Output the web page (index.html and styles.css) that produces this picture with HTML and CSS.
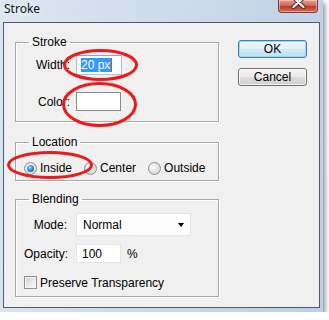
FILE: index.html
```html
<!DOCTYPE html>
<html>
<head>
<meta charset="utf-8">
<link rel="stylesheet" href="styles.css">
</head>
<body>
<div class="window">
  <div class="titlebar">
    <span class="title">Stroke</span>
    <div class="close">
      <svg width="40" height="13" viewBox="0 0 40 13">
        <path d="M15.5 -1.5 L25.5 8 M25.5 -1.5 L15.5 8" stroke="#5a2420" stroke-width="4.2" stroke-linecap="round"/>
        <path d="M15.5 -1.5 L25.5 8 M25.5 -1.5 L15.5 8" stroke="#ffffff" stroke-width="2.2" stroke-linecap="round"/>
      </svg>
    </div>
  </div>
  <div class="client">
    <div class="groups">
      <fieldset class="group g-stroke">
        <legend>Stroke</legend>
        <div class="row r-width">
          <span class="lbl">Width:</span>
          <div class="field f-width"><span class="sel">20 px</span><span class="caret"></span></div>
        </div>
        <div class="row r-color">
          <span class="lbl">Color:</span>
          <div class="swatch"></div>
        </div>
      </fieldset>
      <fieldset class="group g-location">
        <legend>Location</legend>
        <div class="radios">
          <div class="radio"><span class="dot on"></span><span>Inside</span></div>
          <div class="radio"><span class="dot"></span><span>Center</span></div>
          <div class="radio"><span class="dot"></span><span>Outside</span></div>
        </div>
      </fieldset>
      <fieldset class="group g-blending">
        <legend>Blending</legend>
        <div class="row r-mode">
          <span class="lbl">Mode:</span>
          <div class="select"><span>Normal</span><span class="arrow"></span></div>
        </div>
        <div class="row r-opacity">
          <span class="lbl">Opacity:</span>
          <div class="field f-opacity">100</div>
          <span class="pct">%</span>
        </div>
        <div class="check"><span class="box"></span><span>Preserve Transparency</span></div>
      </fieldset>
    </div>
    <div class="buttons">
      <div class="btn btn-default">OK</div>
      <div class="btn">Cancel</div>
    </div>
  </div>
  <svg class="marks" width="329" height="320" viewBox="0 0 329 320">
    <ellipse cx="100.5" cy="65" rx="36" ry="14.5" fill="none" stroke="#ec1b1b" stroke-width="3"/>
    <ellipse cx="99.5" cy="104.5" rx="36" ry="21" fill="none" stroke="#ec1b1b" stroke-width="3"/>
    <ellipse cx="50" cy="165" rx="41.5" ry="12.5" fill="none" stroke="#ec1b1b" stroke-width="3"/>
  </svg>
</div>
</body>
</html>
```

FILE: styles.css
```css
html, body {
  margin: 0;
  padding: 0;
  background: #ffffff;
}

body {
  font-family: "Liberation Sans", Arial, sans-serif;
  font-size: 12px;
  color: #000;
}

.window {
  position: relative;
  width: 323px;
  height: 312px;
  box-sizing: border-box;
  padding: 0 3px 4px 3px;
  display: flex;
  flex-direction: column;
  background: linear-gradient(100deg, #dde7f2 0%, #cfdcec 40%, #bccfe6 100%);
  box-shadow: 2px 3px 5px rgba(0, 0, 0, 0.45);
}

.titlebar {
  height: 22px;
  display: flex;
  justify-content: space-between;
  align-items: flex-start;
  flex: none;
}

.title {
  font-family: "Noto Sans", "Open Sans", sans-serif;
  font-size: 12px;
  line-height: 16px;
  padding: 1px 0 0 1px;
  color: #111;
  text-shadow: 0 0 6px rgba(255, 255, 255, 0.9);
}

.close {
  width: 40px;
  height: 13px;
  margin-right: 2px;
  border: 1px solid #7a3a36;
  border-top: none;
  border-radius: 0 0 4px 4px;
  box-sizing: border-box;
  background: linear-gradient(#e4a295 0%, #d0685c 45%, #bf3c30 55%, #d46a52 100%);
  box-shadow: inset 0 0 0 1px rgba(255, 220, 210, 0.5);
  overflow: hidden;
}

.close svg {
  display: block;
  margin: -1px 0 0 -1px;
}

.client {
  flex: 1;
  display: flex;
  align-items: flex-start;
  border: 1px solid #4e5b6a;
  background: #f0f0f0;
}

.groups {
  margin-left: 11px;
  width: 204px;
  display: flex;
  flex-direction: column;
}

.group {
  margin: 0;
  padding: 0 0 0 8px;
  border: 1px solid #a8a8a8;
  box-shadow: 1px 1px 0 #ffffff, inset 1px 1px 0 #ffffff;
  min-width: 0;
}

.group legend {
  margin-left: 5px;
  padding: 0 3px;
  line-height: 16px;
  height: 16px;
}

.g-stroke {
  margin-top: 11px;
  padding-bottom: 10px;
}

.g-location {
  margin-top: 12px;
  padding-bottom: 4px;
}

.g-blending {
  margin-top: 10px;
  padding-bottom: 7px;
}

.row {
  display: flex;
  align-items: center;
}

.lbl {
  text-align: right;
}

.g-stroke .lbl {
  width: 46px;
  margin-right: 6px;
}

.g-blending .lbl {
  width: 43px;
  margin-right: 9px;
}

.r-width {
  margin-top: 5px;
  height: 20px;
}

.r-color {
  margin-top: 17px;
  height: 19px;
}

.field {
  box-sizing: border-box;
  background: #fff;
  display: flex;
  align-items: center;
}

.f-width {
  width: 46px;
  height: 20px;
  border: 1px solid #a4c6e6;
  border-top-color: #7fa9d2;
  padding-left: 4px;
}

.sel {
  background: #3399ff;
  color: #fff;
  line-height: 14px;
  height: 14px;
  padding: 0 1px 0 0;
}

.caret {
  width: 1px;
  height: 14px;
  background: #b06a20;
}

.swatch {
  width: 45px;
  height: 19px;
  box-sizing: border-box;
  border: 1px solid #8a8a8a;
  background: #fff;
}

.radios {
  margin-top: 10px;
  height: 16px;
  display: flex;
  align-items: center;
  gap: 12px;
}

.radio, .check {
  display: flex;
  align-items: center;
  gap: 3px;
}

.dot {
  width: 13px;
  height: 13px;
  box-sizing: border-box;
  border-radius: 50%;
  border: 1px solid #8e8f8f;
  background: radial-gradient(circle at 40% 35%, #ffffff 0%, #e6e6e6 45%, #c9c9c9 100%);
  display: flex;
  align-items: center;
  justify-content: center;
}

.dot.on::after {
  content: "";
  width: 7px;
  height: 7px;
  border-radius: 50%;
  background: radial-gradient(circle at 40% 35%, #9fe0ff 0%, #3a9ad8 40%, #17507f 100%);
}

.r-mode {
  margin-top: 6px;
  height: 23px;
}

.select {
  width: 115px;
  height: 23px;
  box-sizing: border-box;
  border: 1px solid #e4e4e4;
  background: #fdfdfd;
  display: flex;
  align-items: center;
  justify-content: space-between;
  padding: 0 6px 0 6px;
}

.arrow {
  width: 0;
  height: 0;
  border-left: 3.5px solid transparent;
  border-right: 3.5px solid transparent;
  border-top: 4px solid #000;
}

.r-opacity {
  margin-top: 8px;
  height: 19px;
}

.f-opacity {
  width: 45px;
  height: 19px;
  border: 1px solid #e4e4e4;
  padding-left: 5px;
}

.pct {
  margin-left: 6px;
}

.check {
  margin-top: 13px;
  height: 13px;
}

.box {
  width: 13px;
  height: 13px;
  box-sizing: border-box;
  border: 1px solid #8e8f8f;
  background: linear-gradient(135deg, #d0d0d0 0%, #ececec 60%, #f8f8f8 100%);
  box-shadow: inset 0 0 0 1px #f4f4f4;
}

.buttons {
  margin-left: 19px;
  margin-top: 17px;
  display: flex;
  flex-direction: column;
  gap: 10px;
}

.btn {
  width: 69px;
  height: 18px;
  box-sizing: border-box;
  border: 1px solid #707070;
  border-radius: 3px;
  background: linear-gradient(#f2f2f2 0%, #ebebeb 50%, #dddddd 51%, #cfcfcf 100%);
  box-shadow: inset 0 0 0 1px rgba(255, 255, 255, 0.7);
  text-align: center;
  line-height: 16px;
}

.btn-default {
  border-color: #3c7fb1;
  box-shadow: inset 0 0 0 1px #97d8f4;
  background: linear-gradient(#eef7fc 0%, #e2f1fa 50%, #cfe8f7 51%, #c0e0f4 100%);
}

.marks {
  position: absolute;
  left: 0;
  top: 0;
  pointer-events: none;
}
```
